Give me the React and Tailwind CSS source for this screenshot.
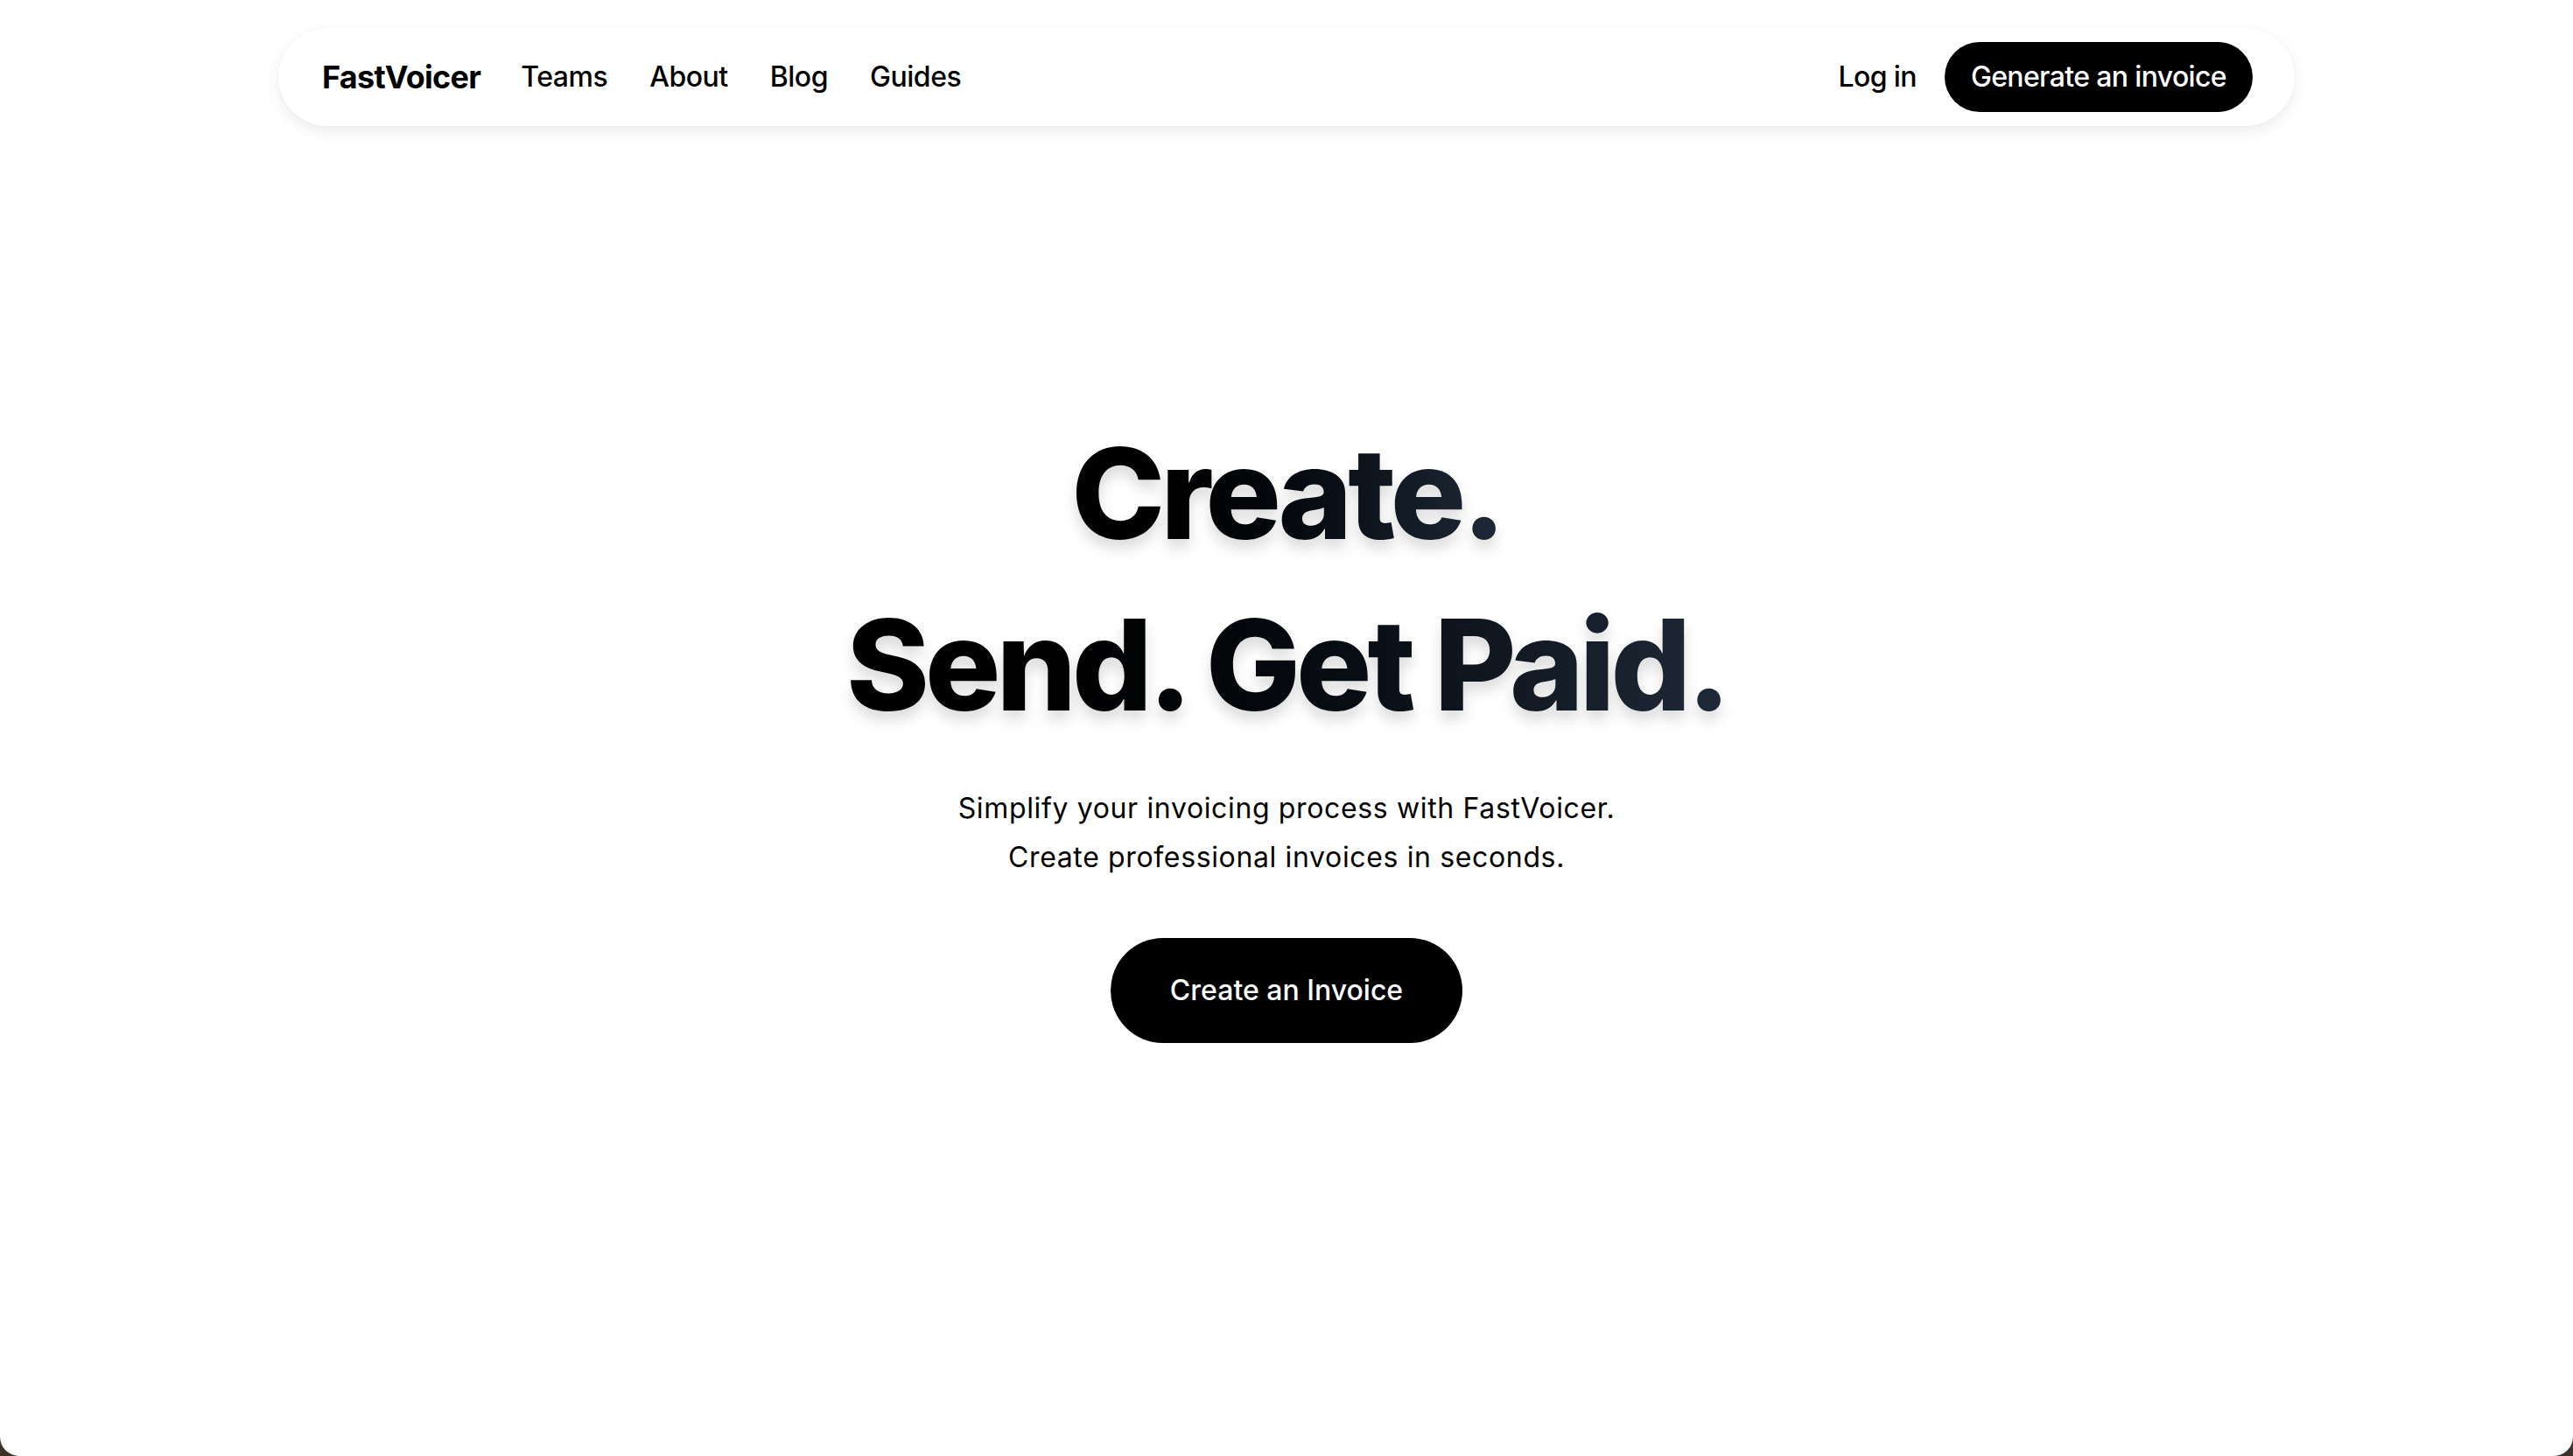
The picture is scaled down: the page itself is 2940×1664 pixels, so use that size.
export default function App() {
  const font = { fontFamily: 'Inter, "Noto Sans", "Liberation Sans", sans-serif' };
  return (
    <div className="w-[2940px] h-[1664px] bg-[#3d3128]" style={font}>
      <div className="w-full h-full bg-white rounded-b-[22px] overflow-hidden flex flex-col items-center">
        <nav className="mt-[32px] w-[2304px] h-[112px] rounded-full bg-white shadow-[0_6px_18px_rgba(0,0,0,0.08),0_0_2px_rgba(0,0,0,0.05)] flex items-center justify-between pl-[50px] pr-[48px]">
          <div className="flex items-center">
            <span className="text-[36px] font-bold tracking-[-0.02em] text-black mr-[46px]">FastVoicer</span>
            <div className="flex items-center gap-[48px] text-[32px] font-medium tracking-[-0.015em] text-black">
              <span>Teams</span>
              <span>About</span>
              <span>Blog</span>
              <span>Guides</span>
            </div>
          </div>
          <div className="flex items-center gap-[32px] text-[32px] font-medium tracking-[-0.02em]">
            <span className="text-black">Log in</span>
            <button className="h-[80px] px-[30px] rounded-full bg-black text-white font-medium tracking-[-0.02em]">Generate an invoice</button>
          </div>
        </nav>

        <h1 className="mt-[322px] flex flex-col items-center text-[144px] leading-[196px] font-extrabold tracking-[-0.035em]">
          <span className="inline-block bg-gradient-to-r from-black to-[#1f2937] bg-clip-text text-transparent drop-shadow-[0_10px_8px_rgba(0,0,0,0.14)]">Create.</span>
          <span className="inline-block bg-gradient-to-r from-black to-[#1f2937] bg-clip-text text-transparent drop-shadow-[0_10px_8px_rgba(0,0,0,0.14)]">Send. Get Paid.</span>
        </h1>

        <p className="mt-[38px] text-[32px] leading-[56px] tracking-[0.02em] text-black text-center">
          Simplify your invoicing process with FastVoicer.
          <br />
          Create professional invoices in seconds.
        </p>

        <button className="mt-[64px] h-[120px] px-[68px] rounded-full bg-black text-white text-[32px] font-medium">Create an Invoice</button>
      </div>
    </div>
  );
}
